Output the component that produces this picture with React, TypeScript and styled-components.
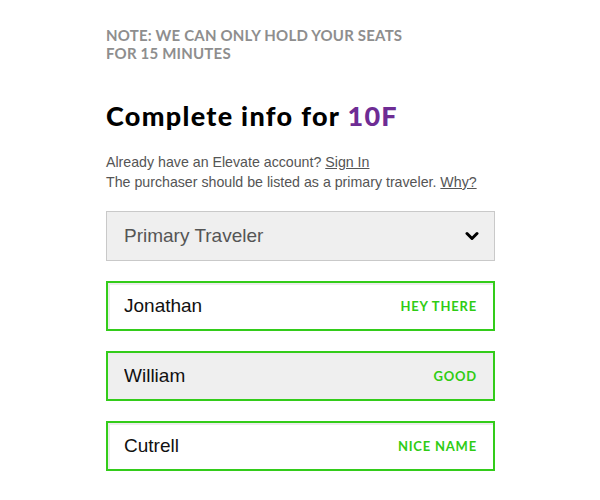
import React from 'react';
import styled, { createGlobalStyle } from 'styled-components';

const GlobalStyle = createGlobalStyle`
  html, body {
    margin: 0;
    padding: 0;
    background: #ffffff;
  }
`;

const Page = styled.div`
  width: 389px;
  margin: 0 auto;
  padding-top: 26px;
  padding-left: 1px;
`;

const Note = styled.p`
  margin: 0;
  font-family: 'Lato', 'Open Sans', sans-serif;
  font-weight: 700;
  font-size: 15px;
  line-height: 18px;
  letter-spacing: 0.2px;
  color: #8e8e8e;
  text-transform: uppercase;
`;

const Heading = styled.h1`
  margin: 38px 0 0;
  font-family: 'Lato', 'Open Sans', sans-serif;
  font-weight: 900;
  font-size: 27px;
  line-height: 32px;
  color: #000;
  letter-spacing: 1.3px;
`;

const Seat = styled.span`
  color: #6e2c94;
`;

const Info = styled.p`
  margin: 20px 0 0;
  font-family: 'Liberation Sans', Arial, sans-serif;
  font-size: 14.2px;
  line-height: 20px;
  color: #555;
`;

const InfoLink = styled.a`
  color: #555;
  text-decoration: underline;
`;

const Fields = styled.div`
  margin-top: 19px;
  display: flex;
  flex-direction: column;
  gap: 20px;
`;

const Select = styled.div`
  box-sizing: border-box;
  height: 50px;
  display: flex;
  align-items: center;
  justify-content: space-between;
  padding: 0 15px 0 17px;
  background: #efefef;
  border: 1px solid #c9c9c9;
  font-family: 'Liberation Sans', Arial, sans-serif;
  font-size: 19px;
  color: #555;
`;

const Field = styled.label<{ $muted?: boolean }>`
  box-sizing: border-box;
  height: 50px;
  display: flex;
  align-items: center;
  padding: 0 16px 0 16px;
  border: 2px solid #33cc1a;
  background: ${p => (p.$muted ? '#efefef' : '#ffffff')};
  box-shadow: inset 2px 2px 0 #ececec;
`;

const FieldInput = styled.input`
  flex: 1;
  min-width: 0;
  border: 0;
  outline: none;
  background: transparent;
  padding: 0;
  font-family: 'Liberation Sans', Arial, sans-serif;
  font-size: 19px;
  color: #111;
`;

const Status = styled.span`
  font-family: 'Lato', 'Open Sans', sans-serif;
  font-weight: 700;
  font-size: 13px;
  letter-spacing: 0.8px;
  color: #2fcc14;
  text-transform: uppercase;
`;

const Chevron = () => (
  <svg width="14" height="10" viewBox="0 0 14 10" aria-hidden="true">
    <path d="M2 2.5 L7 7.5 L12 2.5" fill="none" stroke="#000" strokeWidth="3" strokeLinecap="round" strokeLinejoin="round" />
  </svg>
);

const travelers = [
  { value: 'Jonathan', status: 'Hey there', muted: false },
  { value: 'William', status: 'Good', muted: true },
  { value: 'Cutrell', status: 'Nice name', muted: false },
];

export default function App() {
  return (
    <>
      <GlobalStyle />
      <Page>
        <Note>
          Note: we can only hold your seats
          <br />
          for 15 minutes
        </Note>
        <Heading>
          Complete info for <Seat>10F</Seat>
        </Heading>
        <Info>
          Already have an Elevate account? <InfoLink href="#">Sign In</InfoLink>
          <br />
          The purchaser should be listed as a primary traveler. <InfoLink href="#">Why?</InfoLink>
        </Info>
        <Fields>
          <Select>
            Primary Traveler
            <Chevron />
          </Select>
          {travelers.map(t => (
            <Field key={t.value} $muted={t.muted}>
              <FieldInput defaultValue={t.value} />
              <Status>{t.status}</Status>
            </Field>
          ))}
        </Fields>
      </Page>
    </>
  );
}
